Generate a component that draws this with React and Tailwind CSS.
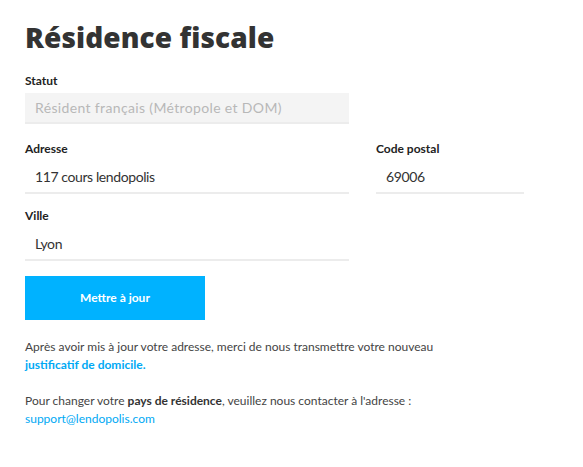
import React from 'react';

// champ de formulaire simple
const Field = ({ label, value, disabled, className }) => (
    <div className={className}>
        <div className="text-[12px] leading-[14px] font-bold text-[#222] mb-[5px]">{label}</div>
        {disabled ? (
            <div className="h-[31px] border-b-2 border-[#ececec] bg-[#f4f4f4] px-[10px] flex items-center text-[14px] tracking-[0.35px] text-[#b8b8b8]">
                {value}
            </div>
        ) : (
            <div className="h-[33px] border-b-2 border-[#ececec] px-[10px] flex items-center text-[14px] tracking-[-0.4px] text-[#333]">
                {value}
            </div>
        )}
    </div>
);

export default function App() {
    return (
        <div className="bg-white w-[583px] h-[467px] px-[25px] pt-[19px] text-[#444]" style={{ fontFamily: 'Lato, "Open Sans", sans-serif' }}>
            <h1 className="text-[28px] leading-[36px] font-extrabold text-[#333] tracking-[0.1px]" style={{ fontFamily: '"Open Sans", Lato, sans-serif' }}>Résidence fiscale</h1>

            <Field className="mt-[19px] w-[324px]" label="Statut" value="Résident français (Métropole et DOM)" disabled />

            <div className="grid grid-cols-[324px_148px] gap-x-[27px] mt-[18px]">
                <Field label="Adresse" value="117 cours lendopolis" />
                <Field label="Code postal" value="69006" />
            </div>

            <Field className="mt-[15px] w-[324px]" label="Ville" value="Lyon" />

            <button className="mt-[15px] w-[180px] h-[44px] bg-[#00b2ff] text-white text-[12px] font-bold flex items-center justify-center">
                Mettre à jour
            </button>

            <p className="mt-[18px] text-[12px] leading-[18px]">
                Après avoir mis à jour votre adresse, merci de nous transmettre votre nouveau
                <br />
                <span className="text-[#00a9f4] font-bold">justificatif de domicile.</span>
            </p>

            <p className="mt-[18px] text-[12px] leading-[18px]">
                Pour changer votre <span className="font-bold text-[#333]">pays de résidence</span>, veuillez nous contacter à l'adresse :
                <br />
                <span className="text-[#00a9f4]">support@lendopolis.com</span>
            </p>
        </div>
    );
}
